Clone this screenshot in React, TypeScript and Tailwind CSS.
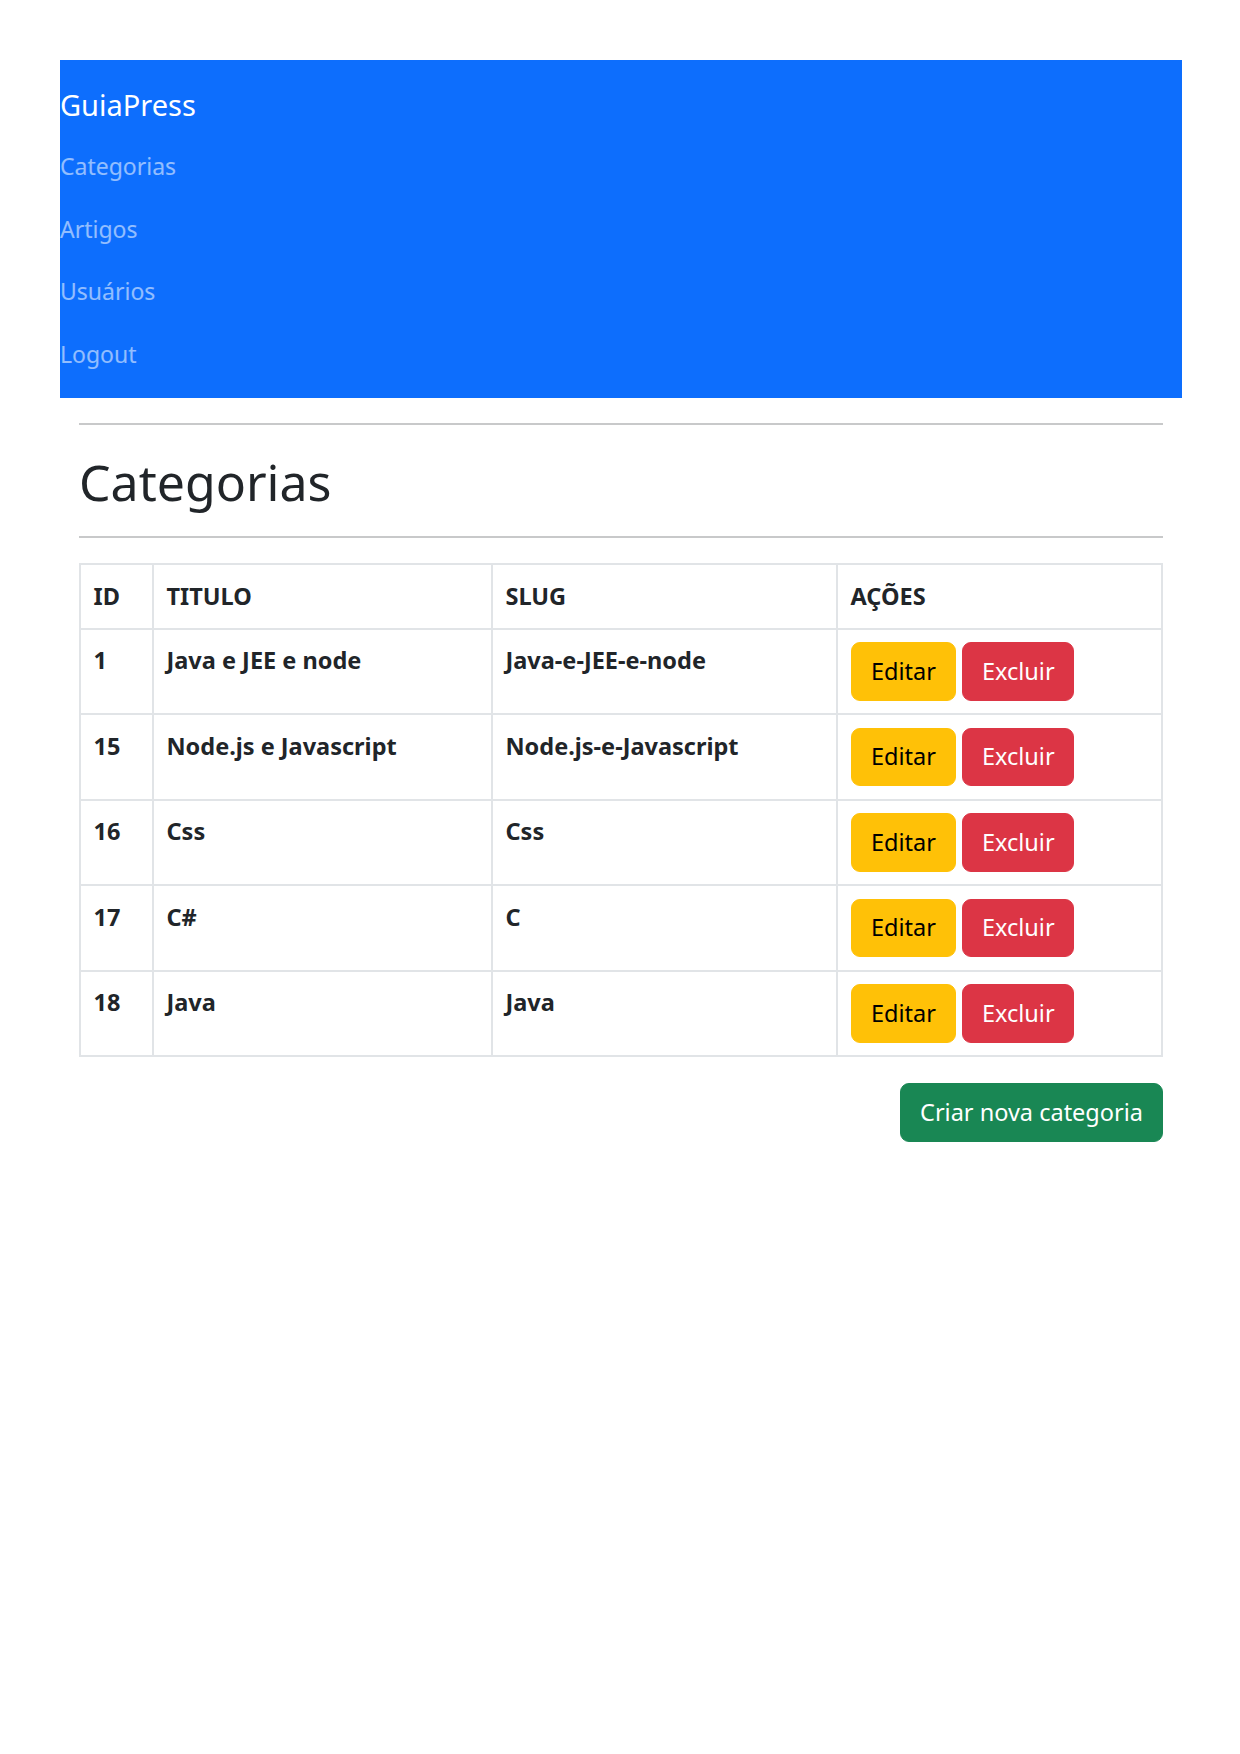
const rows = [
    { id: 1, titulo: "Java e JEE e node", slug: "Java-e-JEE-e-node" },
    { id: 15, titulo: "Node.js e Javascript", slug: "Node.js-e-Javascript" },
    { id: 16, titulo: "Css", slug: "Css" },
    { id: 17, titulo: "C#", slug: "C" },
    { id: 18, titulo: "Java", slug: "Java" },
]

const links = ["Categorias", "Artigos", "Usuários", "Logout"]

const App = () => {
    return (
        <div className="min-h-[1754px] bg-white pl-[60px] pr-[58px] pt-[60px] text-[#212529] [font-family:'Noto_Sans',sans-serif]">
            <nav className="bg-[#0d6efd] py-[12.5px]">
                <a className="block py-[8px] text-[29px] leading-[47px] text-white" href="/">
                    GuiaPress
                </a>
                <ul>
                    {links.map((l) => (
                        <li key={l}>
                            <a className="block py-[12.5px] text-[23px] leading-[37.5px] text-white/55" href="/">
                                {l}
                            </a>
                        </li>
                    ))}
                </ul>
            </nav>

            <div className="px-[19px]">
                <hr className="mt-[25px] border-t-2 border-[#c8c9ca]" />
                <h1 className="mt-[25px] mb-[22px] text-[50px] leading-[64px] font-normal">Categorias</h1>
                <hr className="border-t-2 border-[#c8c9ca]" />

                <table className="mt-[25px] w-full table-fixed border-collapse border-2 border-[#e1e4e7] text-[23.5px] leading-[37.5px]">
                    <colgroup>
                        <col className="w-[73px]" />
                        <col className="w-[339px]" />
                        <col className="w-[345px]" />
                        <col />
                    </colgroup>
                    <thead>
                        <tr>
                            <th className="border-2 border-[#e1e4e7] px-[12.5px] py-[12.5px] text-left font-bold">ID</th>
                            <th className="border-2 border-[#e1e4e7] px-[12.5px] py-[12.5px] text-left font-bold">TITULO</th>
                            <th className="border-2 border-[#e1e4e7] px-[12.5px] py-[12.5px] text-left font-bold">SLUG</th>
                            <th className="border-2 border-[#e1e4e7] px-[12.5px] py-[12.5px] text-left font-bold">AÇÕES</th>
                        </tr>
                    </thead>
                    <tbody>
                        {rows.map((r) => (
                            <tr key={r.id}>
                                <td className="border-2 border-[#e1e4e7] px-[12.5px] py-[12.5px] align-top font-bold">{r.id}</td>
                                <td className="border-2 border-[#e1e4e7] px-[12.5px] py-[12.5px] align-top font-bold">{r.titulo}</td>
                                <td className="border-2 border-[#e1e4e7] px-[12.5px] py-[12.5px] align-top font-bold">{r.slug}</td>
                                <td className="border-2 border-[#e1e4e7] px-[12.5px] py-[12.5px] align-top">
                                    <div className="flex gap-[6px]">
                                        <a className="rounded-[9px] border-[1.5px] border-[#ffc107] bg-[#ffc107] px-[19.5px] py-[9.5px] text-[23.5px] leading-[37.5px] text-black" href="/">
                                            Editar
                                        </a>
                                        <button className="rounded-[9px] border-[1.5px] border-[#dc3545] bg-[#dc3545] px-[18.5px] py-[9.5px] text-[23.5px] leading-[37.5px] text-white">
                                            Excluir
                                        </button>
                                    </div>
                                </td>
                            </tr>
                        ))}
                    </tbody>
                </table>

                <div className="mt-[26px] flex justify-end">
                    <a className="rounded-[9px] border-[1.5px] border-[#198754] bg-[#198754] px-[19px] py-[9.5px] text-[23.5px] leading-[37.5px] text-white" href="/">
                        Criar nova categoria
                    </a>
                </div>
            </div>
        </div>
    )
}

export default App
